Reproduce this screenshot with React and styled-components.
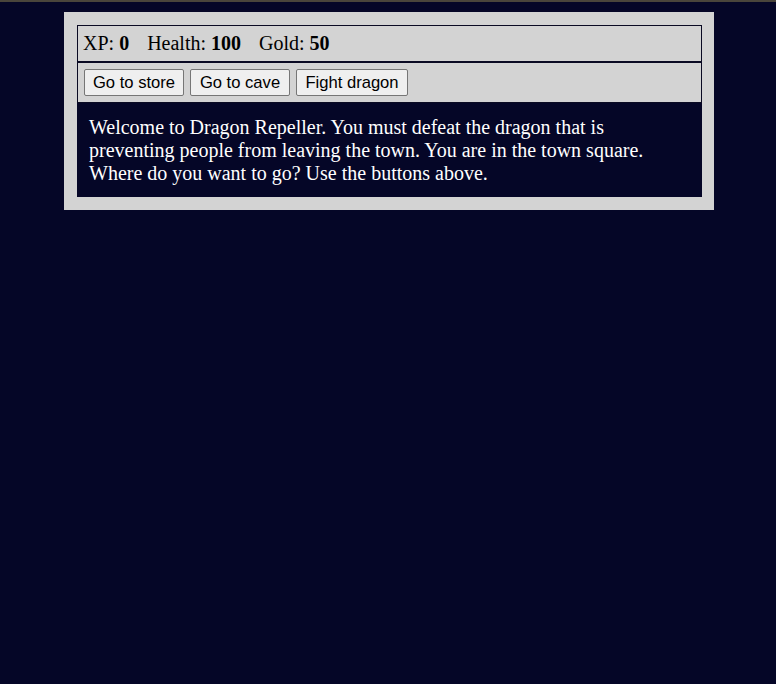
import React from "react";
import styled, { createGlobalStyle } from "styled-components";

const GlobalStyle = createGlobalStyle`
  html, body {
    margin: 0;
    background-color: #050627;
  }
  body {
    border-top: 2px solid #4a453b;
    min-height: 682px;
  }
`;

const Game = styled.div`
  width: 650px;
  box-sizing: border-box;
  margin: 10px 0 0 64px;
  padding: 13px 12px 13px 13px;
  background-color: #d3d3d3;
  font-family: "Liberation Serif", "Times New Roman", serif;
`;

const Bar = styled.div`
  border: 1px solid #0a0a23;
  padding: ${(p) => p.$pad || "6px 5px"};
  color: #000;
  display: flex;
  align-items: center;
  gap: ${(p) => p.$gap || "0"};
`;

const Stat = styled.span`
  font-size: 20px;
  line-height: 23px;
  margin-right: 18px;
  white-space: pre;
`;

const Button = styled.button`
  width: ${(p) => p.$w}px;
  font-family: "Liberation Sans", Arial, sans-serif;
  font-size: 16.6px;
  line-height: 17px;
  padding: 4px 0;
  text-align: center;
  color: #000;
  background-color: #efefef;
  border: 1px solid #767676;
  border-radius: 2px;
`;

const Text = styled.div`
  background-color: #050627;
  color: #ffffff;
  padding: 13px 12px 12px;
  font-size: 20px;
  line-height: 23px;
`;

const stats = [
  { label: "XP", value: 0 },
  { label: "Health", value: 100 },
  { label: "Gold", value: 50 },
];

const buttons = [
  { label: "Go to store", w: 100 },
  { label: "Go to cave", w: 100 },
  { label: "Fight dragon", w: 112 },
];

export default function App() {
  return (
    <>
      <GlobalStyle />
      <Game>
        <Bar>
          {stats.map((s) => (
            <Stat key={s.label}>
              {s.label}: <strong>{s.value}</strong>
            </Stat>
          ))}
        </Bar>
        <Bar $pad="6px 6px 6px" $gap="6px">
          {buttons.map((b) => (
            <Button key={b.label} $w={b.w}>
              {b.label}
            </Button>
          ))}
        </Bar>
        <Text>
          Welcome to Dragon Repeller. You must defeat the dragon that is
          preventing people from leaving the town. You are in the town square.
          Where do you want to go? Use the buttons above.
        </Text>
      </Game>
    </>
  );
}
